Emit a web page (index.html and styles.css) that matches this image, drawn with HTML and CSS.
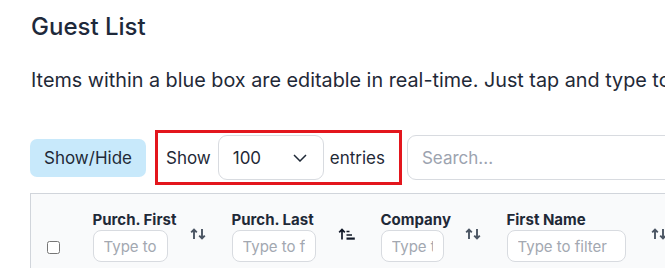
FILE: index.html
```html
<!DOCTYPE html>
<html lang="en">
<head>
  <meta charset="UTF-8">
  <meta name="viewport" content="width=device-width, initial-scale=1.0">
  <title>Guest List</title>
  <link rel="stylesheet" href="styles.css">
</head>
<body>
  <div class="page">
    <h1>Guest List</h1>
    <p class="intro">Items within a blue box are editable in real-time. Just tap and type to make a change.</p>

    <div class="toolbar">
      <button class="btn-toggle" type="button">Show/Hide</button>
      <div class="length">
        <span>Show</span>
        <div class="select">
          <span>100</span>
          <svg width="14" height="8" viewBox="0 0 14 8"><path d="M1 1 L7 7 L13 1" fill="none" stroke="#1f2937" stroke-width="1.5"/></svg>
        </div>
        <span>entries</span>
      </div>
      <input class="search" type="text" placeholder="Search...">
    </div>

    <table class="guests">
      <thead>
        <tr>
          <th class="col-check"><input type="checkbox"></th>
          <th class="col-a">
            <div class="th-inner">
              <div class="th-label">
                <span>Purch. First</span>
                <input class="filter w75" type="text" placeholder="Type to filter">
              </div>
              <svg class="sort" width="16" height="12" viewBox="0 0 16 12"><path d="M4 11 V1.5 M1.2 4.3 L4 1.5 L6.8 4.3 M12 1 V10.5 M9.2 7.7 L12 10.5 L14.8 7.7" fill="none" stroke="#4b5563" stroke-width="1.9"/></svg>
            </div>
          </th>
          <th class="col-b">
            <div class="th-inner">
              <div class="th-label">
                <span>Purch. Last</span>
                <input class="filter w84" type="text" placeholder="Type to filter">
              </div>
              <svg class="sort" width="17" height="12" viewBox="0 0 17 12"><path d="M4 11.5 V1.5 M1.2 4.3 L4 1.5 L6.8 4.3 M8.5 3.5 H11.5 M8.5 7 H14" fill="none" stroke="#111827" stroke-width="1.7"/><path d="M8.5 10.6 H16.8" stroke="#111827" stroke-width="2.2"/></svg>
            </div>
          </th>
          <th class="col-c">
            <div class="th-inner">
              <div class="th-label">
                <span>Company</span>
                <input class="filter w63" type="text" placeholder="Type to filter">
              </div>
              <svg class="sort" width="16" height="12" viewBox="0 0 16 12"><path d="M4 11 V1.5 M1.2 4.3 L4 1.5 L6.8 4.3 M12 1 V10.5 M9.2 7.7 L12 10.5 L14.8 7.7" fill="none" stroke="#4b5563" stroke-width="1.9"/></svg>
            </div>
          </th>
          <th class="col-d">
            <div class="th-inner">
              <div class="th-label">
                <span>First Name</span>
                <input class="filter w119" type="text" placeholder="Type to filter">
              </div>
              <svg class="sort" width="16" height="12" viewBox="0 0 16 12"><path d="M4 11 V1.5 M1.2 4.3 L4 1.5 L6.8 4.3 M12 1 V10.5 M9.2 7.7 L12 10.5 L14.8 7.7" fill="none" stroke="#4b5563" stroke-width="1.9"/></svg>
            </div>
          </th>
          <th class="col-e">
            <div class="th-inner">
              <div class="th-label">
                <span>Last Name</span>
                <input class="filter w119" type="text" placeholder="Type to filter">
              </div>
              <svg class="sort" width="16" height="12" viewBox="0 0 16 12"><path d="M4 11 V1.5 M1.2 4.3 L4 1.5 L6.8 4.3 M12 1 V10.5 M9.2 7.7 L12 10.5 L14.8 7.7" fill="none" stroke="#4b5563" stroke-width="1.9"/></svg>
            </div>
          </th>
        </tr>
      </thead>
    </table>
  </div>
</body>
</html>
```

FILE: styles.css
```css
html, body {
  margin: 0;
  overflow: hidden;
}
body {
  font-family: Inter, "Noto Sans", sans-serif;
  color: #1f2937;
  background: #fff;
}
.page {
  width: 1100px;
  padding-left: 31px;
}
h1 {
  margin: 12px 0 0;
  font-size: 24px;
  font-weight: 500;
  line-height: 29px;
  color: #1e293b;
}
.intro {
  margin: 26px 0 0;
  font-size: 19.8px;
  line-height: 27px;
  white-space: nowrap;
}
.toolbar {
  display: flex;
  align-items: center;
  margin-top: 39px;
  margin-left: -1px;
  font-size: 17px;
}
.btn-toggle {
  height: 38px;
  padding: 0 14px;
  margin-right: 12px;
  border: none;
  border-radius: 7px;
  background: #c8e9fb;
  color: #1f2937;
  font-family: inherit;
  font-size: 17px;
}
.length {
  display: flex;
  align-items: center;
  gap: 7px;
  height: 49px;
  padding: 0 14px 0 8px;
  margin-right: 8px;
  outline: 3px solid #e3161d;
}
.length .select {
  margin-right: -1px;
}
.select {
  display: flex;
  align-items: center;
  justify-content: space-between;
  box-sizing: border-box;
  width: 106px;
  height: 45px;
  padding: 0 16px 0 14px;
  border: 1px solid #d8dbe0;
  border-radius: 9px;
}
.search {
  box-sizing: border-box;
  width: 320px;
  height: 45px;
  padding: 0 14px;
  border: 1px solid #d8dbe0;
  border-radius: 9px;
  font-family: inherit;
  font-size: 17px;
}
.search::placeholder {
  color: #9ca3af;
}
.guests {
  margin-top: 11px;
  margin-left: -1px;
  table-layout: fixed;
  border-collapse: collapse;
  border: 1px solid #d1d5db;
  background: #f9fafb;
}
.guests th {
  box-sizing: border-box;
  padding: 16px 14px 16px 12px;
  text-align: left;
  vertical-align: top;
}
.col-check { width: 50px; }
.col-a { width: 139px; }
.col-b { width: 149px; }
.col-c { width: 126px; }
.col-d { width: 186px; }
.col-e { width: 186px; }
.guests th.col-check {
  padding: 47px 0 0 16px;
}
.col-check input {
  display: block;
  width: 13px;
  height: 13px;
  margin: 0;
}
.th-inner {
  display: flex;
  align-items: center;
  justify-content: space-between;
}
.th-label {
  display: flex;
  flex-direction: column;
  gap: 1px;
  font-size: 15px;
  font-weight: 700;
  color: #1f2937;
  white-space: nowrap;
}
.sort {
  flex: none;
  margin-bottom: 5px;
}
.filter {
  box-sizing: border-box;
  height: 32px;
  padding: 0 10px;
  border: 1px solid #d8dbe0;
  border-radius: 8px;
  background: #fff;
  font-family: inherit;
  font-size: 15px;
}
.filter::placeholder {
  color: #a3a8b1;
}
.w75 { width: 75px; }
.w84 { width: 84px; }
.w63 { width: 63px; }
.w119 { width: 119px; }
```
